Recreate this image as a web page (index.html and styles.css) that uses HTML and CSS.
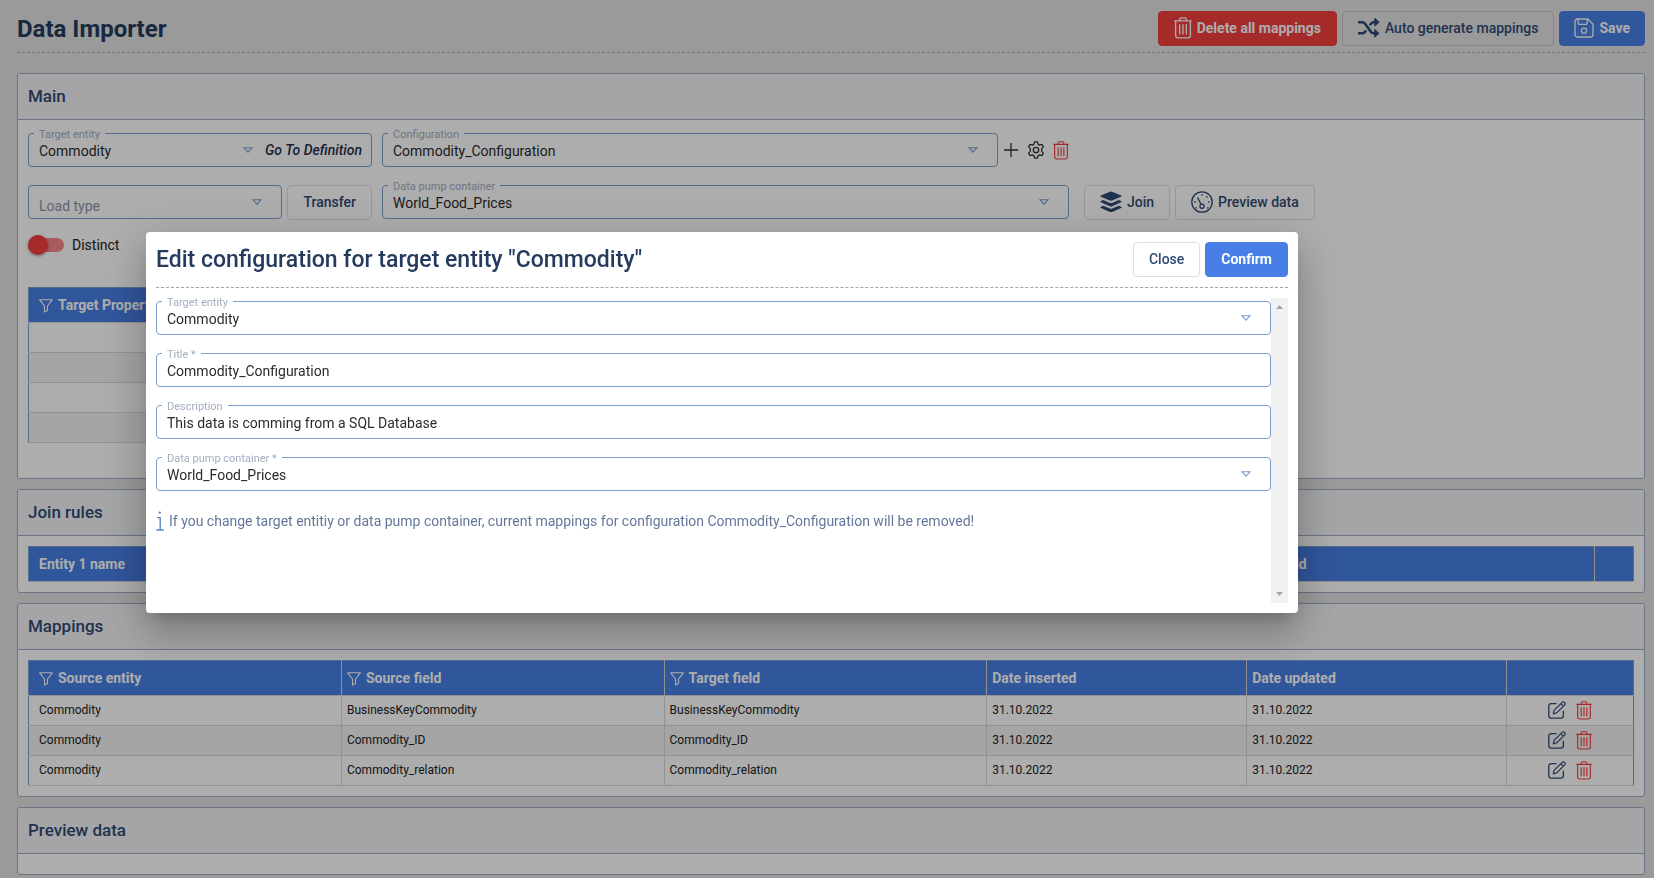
FILE: index.html
```html
<!DOCTYPE html>
<html lang="en">
<head>
<meta charset="utf-8">
<title>Data Importer</title>
<link rel="stylesheet" href="styles.css">
</head>
<body>
<svg class="sprite" aria-hidden="true">
  <symbol id="trash" viewBox="0 0 16 20">
    <path d="M0 3.5h16M5 3.3V2.2Q5 .8 6.3 .8h3.4Q11 .8 11 2.2v1.1M1.3 3.5v13.2q0 2.3 2.3 2.3h8.8q2.3 0 2.3-2.3V3.5M5 6.5v9.5M8 6.5v9.5M11 6.5v9.5" fill="none" stroke="currentColor" stroke-width="1.2"/>
  </symbol>
  <symbol id="shuffle" viewBox="0 0 22 20">
    <path d="M0 4.2h4.2q1.6 0 2.6 1.3l6.4 8.6q.8 1.2 2.2 1.2h2M0 15.3h4.2q1.6 0 2.6-1.2l1.2-1.6M11.8 7.3l1.4-1.8q.9-1.3 2.2-1.3h2" fill="none" stroke="currentColor" stroke-width="2.6"/>
    <path d="M16.2.6v7.2q.4.9 1.2.2l3.5-3.2q.7-.6 0-1.2L17.4.3q-.8-.7-1.2.3zM16.2 11.7v7.2q.4.9 1.2.2l3.5-3.2q.7-.6 0-1.2l-3.5-3.3q-.8-.7-1.2.3z" fill="currentColor"/>
  </symbol>
  <symbol id="save" viewBox="0 0 20 20">
    <path d="M3.6 1h10.2L19 6.2v10.2q0 2.6-2.6 2.6H3.6Q1 19 1 16.400V3.600Q1 1 3.600 1zM4.200 1v4.300q0 1 1 1h7q1 0 1-1V1" fill="none" stroke="currentColor" stroke-width="1.300"/>
    <circle cx="10" cy="12.800" r="2.600" fill="none" stroke="currentColor" stroke-width="1.300"/>
  </symbol>
  <symbol id="caret" viewBox="0 0 10 6">
    <path d="M1 .7h8L5 5.200z" fill="none" stroke="currentColor" stroke-width="1.100"/>
  </symbol>
  <symbol id="plus" viewBox="0 0 16 16">
    <path d="M8 1v14M1 8h14" fill="none" stroke="currentColor" stroke-width="1.300"/>
  </symbol>
  <symbol id="gear" viewBox="0 0 18 18">
    <path d="M7.600.8h2.800l.6 2.300 1.600 1 2.300-.7 1.500 2.500-1.700 1.700v2.800l1.700 1.700-1.500 2.500-2.300-.7-1.600 1-.6 2.300H7.600L7 14.900l-1.600-1-2.300.7-1.500-2.500 1.700-1.700V7.600L1.600 5.900l1.500-2.500 2.300.7 1.600-1z" fill="none" stroke="currentColor" stroke-width="1.300" stroke-linejoin="round"/>
    <circle cx="9" cy="9" r="2.700" fill="none" stroke="currentColor" stroke-width="1.300"/>
  </symbol>
  <symbol id="layers" viewBox="0 0 22 22">
    <path d="M11 .6q.6 0 1.100.2l9 3.700q1.100.6 0 1.200l-9 3.900q-1.100.4-2.200 0l-9-3.900q-1.100-.6 0-1.200l9-3.700Q10.400.6 11 .6z" fill="currentColor"/>
    <path d="M3.200 9.100l6.600 2.800q1.200.4 2.400 0l6.600-2.800 2.300 1q1.100.6 0 1.200l-9 3.900q-1.100.4-2.200 0l-9-3.900q-1.100-.6 0-1.200zM3.200 14.800l6.600 2.800q1.200.4 2.400 0l6.600-2.800 2.300 1q1.100.6 0 1.200l-9 3.900q-1.100.4-2.200 0l-9-3.900q-1.100-.6 0-1.200z" fill="currentColor"/>
  </symbol>
  <symbol id="gauge" viewBox="0 0 22 22">
    <circle cx="11" cy="11" r="10.200" fill="none" stroke="currentColor" stroke-width="1.300"/>
    <circle cx="11" cy="15.200" r="2.100" fill="none" stroke="currentColor" stroke-width="1.300"/>
    <path d="M10 13.300L6.600 6.600" stroke="currentColor" stroke-width="1.300"/>
    <path d="M11 3.300v1.500M16.500 5.600l-1 1M18.700 11h-1.500M4.800 11H3.300M5.600 16.400l-.8.800M16.400 16.400l.8.800" stroke="currentColor" stroke-width="1.400"/>
  </symbol>
  <symbol id="filter" viewBox="0 0 14 14">
    <path d="M.7.8h12.600L8.500 7v4.600L5.500 13V7z" fill="none" stroke="currentColor" stroke-width="1.100" stroke-linejoin="round"/>
  </symbol>
  <symbol id="edit" viewBox="0 0 18 18">
    <path d="M8.500 2.600H3.400Q.8 2.600.8 5.200v9.400q0 2.600 2.600 2.600h9.400q2.600 0 2.600-2.600V9.700" fill="none" stroke="currentColor" stroke-width="1.300"/>
    <path d="M5.300 12.900l.8-3.500 8-8q1.200-1 2.400 0 1.200 1.200.2 2.400l-8 8zM12.800 2.700l2.600 2.600" fill="none" stroke="currentColor" stroke-width="1.200" stroke-linejoin="round"/>
  </symbol>
  <symbol id="info" viewBox="0 0 8 20">
    <circle cx="3.800" cy="1.600" r="1.200" fill="currentColor"/>
    <path d="M1 6.600h3.200v12M.3 19h7.400" fill="none" stroke="currentColor" stroke-width="1.400"/>
  </symbol>
</svg>

<main class="page">
  <header class="page-header">
    <h1>Data Importer</h1>
    <div class="actions">
      <button class="btn danger" type="button"><svg class="i-trash-lg"><use href="#trash"/></svg>Delete all mappings</button>
      <button class="btn" type="button"><svg class="i-shuffle"><use href="#shuffle"/></svg>Auto generate mappings</button>
      <button class="btn primary" type="button"><svg class="i-save"><use href="#save"/></svg>Save</button>
    </div>
  </header>

  <section class="card card-main">
    <h2>Main</h2>
    <div class="card-body">
      <div class="form-row">
        <div class="field w-entity">
          <label for="m-entity">Target entity</label>
          <select id="m-entity"><option>Commodity</option></select>
          <svg class="caret"><use href="#caret"/></svg>
          <a class="definition" href="#definition">Go To Definition</a>
        </div>
        <div class="field w-config">
          <label for="m-config">Configuration</label>
          <select id="m-config"><option>Commodity_Configuration</option></select>
          <svg class="caret"><use href="#caret"/></svg>
        </div>
        <div class="tools">
          <button class="icon-btn" type="button" aria-label="Add"><svg class="i-plus"><use href="#plus"/></svg></button>
          <button class="icon-btn" type="button" aria-label="Settings"><svg class="i-gear"><use href="#gear"/></svg></button>
          <button class="icon-btn red" type="button" aria-label="Delete"><svg class="i-trash"><use href="#trash"/></svg></button>
        </div>
      </div>
      <div class="form-row">
        <div class="load-group">
          <div class="field empty">
            <select id="m-load" aria-label="Load type"><option>Load type</option></select>
            <svg class="caret"><use href="#caret"/></svg>
          </div>
          <button class="btn" type="button">Transfer</button>
        </div>
        <div class="field w-pump">
          <label for="m-pump">Data pump container</label>
          <select id="m-pump"><option>World_Food_Prices</option></select>
          <svg class="caret"><use href="#caret"/></svg>
        </div>
        <div class="actions data-actions">
          <button class="btn" type="button"><svg class="i-round"><use href="#layers"/></svg>Join</button>
          <button class="btn" type="button"><svg class="i-round"><use href="#gauge"/></svg>Preview data</button>
        </div>
      </div>
      <label class="toggle"><input type="checkbox" role="switch">Distinct</label>
      <table class="grid properties">
        <thead><tr><th><svg class="i-filter"><use href="#filter"/></svg>Target Property</th></tr></thead>
        <tbody><tr><td></td></tr><tr><td></td></tr><tr><td></td></tr><tr><td></td></tr></tbody>
      </table>
    </div>
  </section>

  <section class="card">
    <h2>Join rules</h2>
    <div class="card-body">
      <table class="grid joins">
        <colgroup><col class="j1"><col class="j2"><col class="j3"><col class="j4"><col class="j5"></colgroup>
        <thead><tr><th>Entity 1 name</th><th>Entity 1 field</th><th>Entity 2 name</th><th>Entity 2 field</th><th></th></tr></thead>
      </table>
    </div>
  </section>

  <section class="card">
    <h2>Mappings</h2>
    <div class="card-body">
      <table class="grid">
        <colgroup><col class="c1"><col class="c2"><col class="c2"><col class="c3"><col class="c3"><col class="c4"></colgroup>
        <thead><tr>
          <th><svg class="i-filter"><use href="#filter"/></svg>Source entity</th>
          <th><svg class="i-filter"><use href="#filter"/></svg>Source field</th>
          <th><svg class="i-filter"><use href="#filter"/></svg>Target field</th>
          <th>Date inserted</th><th>Date updated</th><th></th>
        </tr></thead>
        <tbody>
          <tr><td>Commodity</td><td>BusinessKeyCommodity</td><td>BusinessKeyCommodity</td><td>31.10.2022</td><td>31.10.2022</td>
            <td><div class="row-tools"><button class="icon-btn navy" type="button" aria-label="Edit"><svg class="i-edit"><use href="#edit"/></svg></button><button class="icon-btn red" type="button" aria-label="Delete"><svg class="i-trash"><use href="#trash"/></svg></button></div></td></tr>
          <tr><td>Commodity</td><td>Commodity_ID</td><td>Commodity_ID</td><td>31.10.2022</td><td>31.10.2022</td>
            <td><div class="row-tools"><button class="icon-btn navy" type="button" aria-label="Edit"><svg class="i-edit"><use href="#edit"/></svg></button><button class="icon-btn red" type="button" aria-label="Delete"><svg class="i-trash"><use href="#trash"/></svg></button></div></td></tr>
          <tr><td>Commodity</td><td>Commodity_relation</td><td>Commodity_relation</td><td>31.10.2022</td><td>31.10.2022</td>
            <td><div class="row-tools"><button class="icon-btn navy" type="button" aria-label="Edit"><svg class="i-edit"><use href="#edit"/></svg></button><button class="icon-btn red" type="button" aria-label="Delete"><svg class="i-trash"><use href="#trash"/></svg></button></div></td></tr>
        </tbody>
      </table>
    </div>
  </section>

  <section class="card">
    <h2>Preview data</h2>
    <div class="card-body"></div>
  </section>
</main>

<div class="backdrop">
  <div class="dialog" role="dialog" aria-modal="true" aria-labelledby="dialog-title">
    <header class="dialog-header">
      <h2 id="dialog-title">Edit configuration for target entity "Commodity"</h2>
      <div class="actions">
        <button class="btn" type="button">Close</button>
        <button class="btn primary" type="button">Confirm</button>
      </div>
    </header>
    <div class="dialog-content">
      <form class="dialog-form">
        <div class="field">
          <label for="d-entity">Target entity</label>
          <select id="d-entity"><option>Commodity</option></select>
          <svg class="caret"><use href="#caret"/></svg>
        </div>
        <div class="field">
          <label for="d-title">Title *</label>
          <input id="d-title" type="text" value="Commodity_Configuration">
        </div>
        <div class="field">
          <label for="d-desc">Description</label>
          <input id="d-desc" type="text" value="This data is comming from a SQL Database">
        </div>
        <div class="field">
          <label for="d-pump">Data pump container *</label>
          <select id="d-pump"><option>World_Food_Prices</option></select>
          <svg class="caret"><use href="#caret"/></svg>
        </div>
        <p class="note"><svg class="i-info"><use href="#info"/></svg>If you change target entitiy or data pump container, current mappings for configuration Commodity_Configuration will be removed!</p>
      </form>
      <div class="scrollbar" aria-hidden="true">
        <svg viewBox="0 0 17 17"><path d="M5 11h7L8.500 7z" fill="#a3a3a3"/></svg>
        <svg viewBox="0 0 17 17"><path d="M5 6h7l-3.500 4z" fill="#a3a3a3"/></svg>
      </div>
    </div>
  </div>
</div>
</body>
</html>
```
FILE: styles.css
```css
* { box-sizing: border-box; }
body {
  margin: 0;
  background: #e4e4e4;
  color: #212121;
  font-family: Roboto, "Liberation Sans", sans-serif;
  font-size: 14px;
}
svg { display: block; flex: none; }
.sprite { position: absolute; width: 0; height: 0; }
h1, h2, p { margin: 0; }

.page { padding: 11px 9px 3px 17px; display: flex; flex-direction: column; gap: 10px; }
.page-header {
  display: flex;
  justify-content: space-between;
  align-items: flex-start;
  padding-bottom: 6px;
  margin-bottom: 10px;
  border-bottom: 1px dashed #9dadc5;
}
h1 { padding-top: 1px; font-size: 24px; line-height: 34px; font-weight: 700; color: #243b5e; }
.actions { display: flex; gap: 5px; }
.data-actions { margin-left: 5px; }

.btn {
  display: inline-flex;
  align-items: center;
  justify-content: center;
  gap: 5px;
  height: 35px;
  padding: 0 15px 1px;
  border: 1px solid #0000001f;
  border-radius: 4px;
  background: transparent;
  color: #304a74;
  font: 500 14px/20px Roboto, sans-serif;
  white-space: nowrap;
}
.btn.primary { background: #487fe6; border-color: #487fe6; color: #fff; font-weight: 700; }
.page-header .btn.primary { padding: 0 14px 1px; }
.btn.danger { background: #f44040; border-color: #f44040; color: #fff; font-weight: 700; }
.icon-btn { display: flex; padding: 0; border: 0; background: none; color: #333; }
.icon-btn.red { color: #f44040; }
.icon-btn.navy { color: #304a74; }
.i-trash-lg { width: 18px; height: 22px; }
.i-shuffle { width: 22px; height: 20px; }
.i-save { width: 20px; height: 20px; }
.i-round { width: 22px; height: 22px; }
.i-plus { width: 16px; height: 16px; }
.i-gear, .i-edit { width: 18px; height: 18px; }
.i-trash { width: 16px; height: 19px; }
.i-filter { width: 14px; height: 14px; }
.i-info { width: 8px; height: 20px; color: #5b86c4; }

.card { border: 1px solid #9dadc5; border-radius: 3px; background: #fff; }
.card > h2 {
  padding: 0 10px;
  border-bottom: 1px solid #9dadc5;
  border-radius: 3px 3px 0 0;
  background: #f3f4f7;
  color: #304a74;
  font-size: 17px;
  line-height: 45px;
  font-weight: 500;
}
.card-body { padding: 10px; }
.card-main .card-body { padding: 13px 10px 35px; }

.form-row { display: flex; align-items: flex-start; gap: 10px; height: 34px; margin-bottom: 18px; }
.field {
  position: relative;
  display: flex;
  align-items: center;
  height: 34px;
  border: 1px solid #7c9fd0;
  border-radius: 4px;
  background: #fff;
}
.field label {
  position: absolute;
  top: -5px;
  left: 5px;
  padding: 0 5px;
  background: #fff;
  color: #a2adbf;
  font-size: 11px;
  line-height: 12px;
}
.field select, .field input {
  flex: 1;
  min-width: 0;
  height: 32px;
  padding: 2px 10px 0;
  border: 0;
  outline: 0;
  appearance: none;
  background: transparent;
  color: #2b2b2b;
  font: 400 14px/20px Roboto, sans-serif;
}
.field.empty select { padding-top: 8px; color: #8b96a8; }
.caret { width: 10px; height: 6px; margin-right: 19px; color: #7c9fd0; }
.w-entity { width: 344px; }
.w-entity .caret { margin-right: 12px; }
.definition { margin-right: 9px; color: #1f2f4a; font-weight: 500; font-style: italic; text-decoration: none; }
.w-config { width: 616px; }
.w-pump { width: 687px; }
.load-group { display: flex; gap: 5px; width: 344px; }
.load-group .field { flex: 1; }
.tools { display: flex; align-items: center; gap: 8px; height: 34px; margin-left: -5px; }

.toggle { display: flex; align-items: center; gap: 8px; height: 16px; margin-bottom: 34px; }
.toggle input {
  appearance: none;
  display: flex;
  align-items: center;
  width: 36px;
  height: 14px;
  margin: 0;
  border-radius: 7px;
  background: #f98888;
}
.toggle input::before {
  content: "";
  width: 20px;
  height: 20px;
  border-radius: 50%;
  background: #f44040;
  box-shadow: 0 1px 3px #00000066;
}

.grid { width: 100%; table-layout: fixed; border-collapse: collapse; border: 1px solid #7c9fd0; border-bottom-color: #d8d8d8; }
.grid th, .grid td { padding: 0 5px; border: 1px solid #d8d8d8; text-align: left; white-space: nowrap; }
.grid th:first-child, .grid td:first-child { padding-left: 10px; border-left-color: #7c9fd0; }
.grid th:last-child, .grid td:last-child { border-right-color: #7c9fd0; }
.grid th { height: 35px; border-top-color: #7c9fd0; background: #487fe6; color: #fff; font-size: 14px; font-weight: 700; }
.grid th svg { display: inline-block; margin-right: 5px; vertical-align: -3px; }
.grid td { height: 30px; padding-bottom: 1px; font-size: 12px; }
.grid tbody tr:nth-child(even) { background: #f3f3f3; }
.grid.properties { width: 60%; }
.c1 { width: 19.5%; }
.c2 { width: 20.1%; }
.c3 { width: 16.2%; }
.c4 { width: 7.9%; }
.j1, .j2, .j3 { width: 24.8%; }
.j5 { width: 2.4%; }
.row-tools { display: flex; justify-content: center; gap: 10px; }

.backdrop { position: fixed; inset: 0; padding: 232px 146px 0; background: #00000052; }
.dialog {
  width: 1152px;
  max-width: 100%;
  padding: 10px;
  border-radius: 4px;
  background: #fff;
  box-shadow: 0 11px 15px -7px #00000033, 0 24px 38px 3px #00000024, 0 9px 46px 8px #0000001f;
}
.dialog-header {
  display: flex;
  justify-content: space-between;
  align-items: center;
  padding-bottom: 10px;
  border-bottom: 1px dashed #9da5b5;
}
.dialog-header h2 { color: #243b5e; font-size: 23px; line-height: 35px; font-weight: 500; }
.dialog-content { display: flex; margin-top: 10px; height: 305px; }
.dialog-form { flex: 1; display: flex; flex-direction: column; gap: 18px; padding-top: 3px; }
.note { display: flex; align-items: center; gap: 5px; margin-top: 2px; color: #64779b; line-height: 20px; }
.scrollbar { display: flex; flex-direction: column; justify-content: space-between; width: 17px; background: #f1f1f1; }
.scrollbar svg { width: 17px; height: 17px; }
```
